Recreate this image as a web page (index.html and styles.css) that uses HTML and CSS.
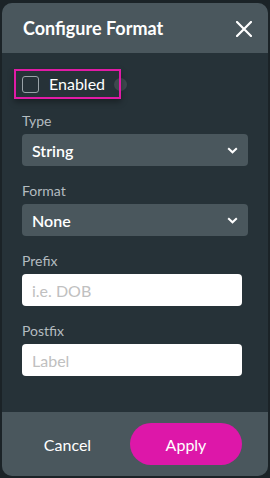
FILE: index.html
```html
<!DOCTYPE html>
<html lang="en">
<head>
<meta charset="utf-8">
<title>Configure Format</title>
<link rel="stylesheet" href="styles.css">
</head>
<body>
<div class="dialog">
  <div class="header">
    <h1 class="title">Configure Format</h1>
    <button class="close" aria-label="Close">
      <svg width="16" height="16" viewBox="0 0 16 16"><path d="M1 1L15 15M15 1L1 15" stroke="#fff" stroke-width="2.2" stroke-linecap="square"/></svg>
    </button>
  </div>
  <div class="body">
    <div class="enabled-row">
      <span class="knob"></span>
      <label class="enabled">
        <span class="checkbox"></span>
        <span class="enabled-text">Enabled</span>
      </label>
    </div>
    <div class="field">
      <div class="label">Type</div>
      <div class="select"><span>String</span>
        <svg width="11" height="7" viewBox="0 0 11 7"><path d="M1.2 1.2L5.5 5.3L9.8 1.2" fill="none" stroke="#fff" stroke-width="2"/></svg>
      </div>
    </div>
    <div class="field">
      <div class="label">Format</div>
      <div class="select"><span>None</span>
        <svg width="11" height="7" viewBox="0 0 11 7"><path d="M1.2 1.2L5.5 5.3L9.8 1.2" fill="none" stroke="#fff" stroke-width="2"/></svg>
      </div>
    </div>
    <div class="field">
      <div class="label">Prefix</div>
      <div class="input"><span class="ph">i.e. DOB</span></div>
    </div>
    <div class="field">
      <div class="label">Postfix</div>
      <div class="input"><span class="ph">Label</span></div>
    </div>
  </div>
  <div class="footer">
    <button class="cancel">Cancel</button>
    <button class="apply">Apply</button>
  </div>
</div>
</body>
</html>
```
FILE: styles.css
```css
html, body {
  margin: 0;
  padding: 0;
  background: #1b2327;
  font-family: Lato, "Open Sans", sans-serif;
}
.dialog {
  margin: 3px 0 0 2px;
  width: 266px;
  height: 473px;
  border-radius: 10px;
  overflow: hidden;
  background: #263238;
  display: flex;
  flex-direction: column;
}
.header {
  height: 50px;
  flex: none;
  background: #4a575d;
  display: flex;
  align-items: center;
  justify-content: space-between;
  padding: 0 16px 0 21px;
  box-sizing: border-box;
}
.title {
  margin: 0;
  font-size: 18px;
  font-weight: 700;
  color: #fff;
  line-height: 20px;
}
.close {
  background: none;
  border: 0;
  padding: 0;
  width: 16px;
  height: 16px;
  display: block;
  margin-top: 1px;
}
.close svg { display: block; }
.body {
  flex: 1;
  padding: 16px 0 0 20px;
}
.enabled-row {
  position: relative;
  display: flex;
  margin-left: -8px;
  margin-bottom: 14px;
  height: 30px;
}
.enabled {
  position: relative;
  display: flex;
  align-items: center;
  box-sizing: border-box;
  width: 107px;
  height: 30px;
  border: 2px solid #e01ba6;
  padding-left: 6px;
  gap: 10px;
  box-shadow: 0 3px 6px rgba(0, 0, 0, 0.35);
}
.checkbox {
  width: 17px;
  height: 17px;
  box-sizing: border-box;
  border: 1.5px solid #9aa3a8;
  border-radius: 3px;
}
.enabled-text {
  color: #fff;
  font-size: 16px;
  line-height: 18px;
}
.knob {
  position: absolute;
  left: 100px;
  top: 9px;
  width: 13px;
  height: 13px;
  border-radius: 50%;
  background: #3e494e;
}
.field {
  margin-bottom: 17px;
}
.label {
  color: #b4bcc0;
  font-size: 14px;
  line-height: 16px;
  margin-bottom: 5px;
}
.select {
  width: 226px;
  height: 32px;
  box-sizing: border-box;
  background: #4a575d;
  border-radius: 4px;
  display: flex;
  align-items: center;
  justify-content: space-between;
  padding: 0 10px 0 10px;
  color: #fff;
  font-size: 16px;
  font-weight: 600;
}
.select svg { display: block; margin-top: 1px; }
.input {
  width: 220px;
  height: 32px;
  box-sizing: border-box;
  background: #fff;
  border-radius: 4px;
  display: flex;
  align-items: center;
  padding-left: 10px;
}
.ph {
  color: #c0c0c0;
  font-size: 16px;
}
.footer {
  height: 64px;
  flex: none;
  background: #4a575d;
  display: flex;
  align-items: center;
  padding: 0 0 0 18px;
  box-sizing: border-box;
}
.cancel {
  width: 95px;
  height: 42px;
  background: none;
  border: 0;
  color: #fff;
  font-family: Lato, sans-serif;
  font-size: 16px;
  padding: 0;
}
.apply {
  margin-left: 15px;
  width: 112px;
  height: 42px;
  border: 0;
  border-radius: 21px;
  background: #dd17a9;
  color: #fff;
  font-family: Lato, sans-serif;
  font-size: 16px;
  padding: 0;
}
```
